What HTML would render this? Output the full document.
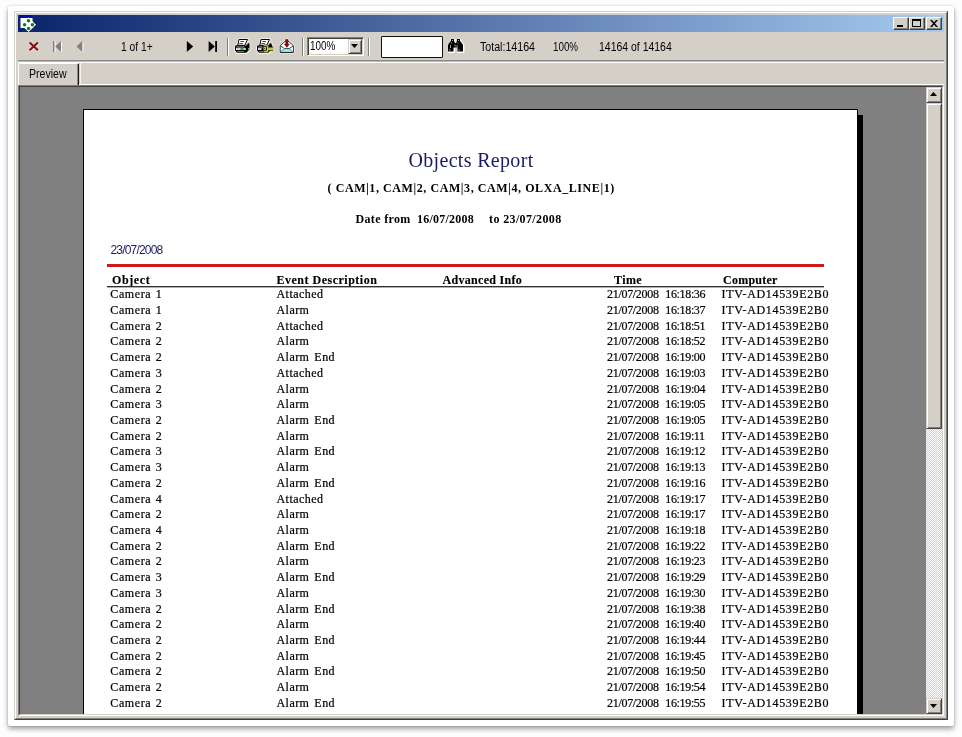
<!DOCTYPE html>
<html><head><meta charset="utf-8"><title>Objects Report</title>
<style>
html,body{margin:0;padding:0;}
body{width:962px;height:737px;position:relative;overflow:hidden;background:#fdfdfd;font-family:"Liberation Sans",sans-serif;font-size:11px;color:#000;}
div,span{box-sizing:border-box;}
.abs{position:absolute;}
#card{position:absolute;left:8px;top:6px;width:946px;height:720px;background:#fff;border-radius:2px;box-shadow:0 3px 5px rgba(0,0,0,.36),0 0 2px rgba(0,0,0,.2);}
#win{position:absolute;left:14px;top:11px;width:934px;height:709px;background:#d4d0c8;border-top:1px solid #d4d0c8;border-left:1px solid #d4d0c8;border-right:1px solid #404040;border-bottom:1px solid #404040;}
#win2{position:absolute;left:15px;top:12px;width:932px;height:707px;border-top:1px solid #fff;border-left:1px solid #fff;border-right:1px solid #808080;border-bottom:1px solid #808080;}
#title{position:absolute;left:18px;top:15px;width:926px;height:17px;background:linear-gradient(to right,#0a246a 0%,#a6caf0 100%);}
.tb{position:absolute;top:17px;width:16px;height:13px;background:#d4d0c8;border-top:1px solid #fff;border-left:1px solid #fff;border-right:1px solid #404040;border-bottom:1px solid #404040;box-shadow:inset -1px -1px 0 #808080;}
#tsep1{position:absolute;left:18px;top:60px;width:926px;height:1px;background:#8e8c86;}
#tsep1b{position:absolute;left:18px;top:61px;width:926px;height:1px;background:#bcb8b0;}
#tsep2{position:absolute;left:18px;top:62px;width:926px;height:1px;background:#fff;}
.vsep{position:absolute;top:38px;width:2px;height:18px;border-left:1px solid #808080;border-right:1px solid #fff;}
.t{position:absolute;white-space:nowrap;line-height:14px;font-size:11px;}
#tab{position:absolute;left:18px;top:63px;width:61px;height:23px;background:#d4d0c8;border-top:1px solid #fff;border-left:1px solid #fff;border-right:1px solid #181818;box-shadow:inset -1px 0 0 #8a8a86;border-radius:2px 2px 0 0;}
#tabline{position:absolute;left:79px;top:84px;width:865px;height:1px;background:#fff;}
#view{position:absolute;left:18px;top:85px;width:926px;height:631px;background:#808080;border-top:1px solid #808080;border-left:1px solid #808080;border-right:1px solid #fff;border-bottom:1px solid #fff;}
#view2{position:absolute;left:19px;top:86px;width:924px;height:629px;background:#808080;border-top:1px solid #404040;border-left:1px solid #404040;border-right:1px solid #d4d0c8;border-bottom:1px solid #d4d0c8;}
#pageshadow{position:absolute;left:857px;top:115px;width:6px;height:600px;background:#000;}
#page{position:absolute;left:83px;top:109px;width:775px;height:620px;background:#fff;border:1px solid #000;}
#clip{position:absolute;left:0;top:0;width:962px;height:714px;overflow:hidden;}
.s{font-family:"Liberation Serif",serif;}
.h{font-family:"Liberation Serif",serif;font-size:12px;font-weight:bold;top:273px;}
.r{position:absolute;left:0;height:14px;width:962px;font-family:"Liberation Serif",serif;font-size:12px;line-height:14px;letter-spacing:0.45px;white-space:nowrap;}
.r span{position:absolute;top:0;}
.c1{left:110.3px;letter-spacing:0.6px;word-spacing:1px;}
.c2{left:276.5px;word-spacing:1.5px;}
.c4{left:607px;letter-spacing:-0.3px;}
.c4b{left:665.3px;letter-spacing:-0.35px;}
.c5{left:721.6px;letter-spacing:0.67px;}
#sb{position:absolute;left:926px;top:87px;width:16px;height:627px;background:#eae8e4 conic-gradient(#fff 25%,#d4d0c8 0 50%,#fff 0 75%,#d4d0c8 0) 0 0/2px 2px;}
.sbtn{position:absolute;left:0;width:16px;height:16px;background:#d4d0c8;border-top:1px solid #d4d0c8;border-left:1px solid #d4d0c8;border-right:1px solid #404040;border-bottom:1px solid #404040;box-shadow:inset 1px 1px 0 #fff, inset -1px -1px 0 #808080;}
.tx{font-size:12px;transform-origin:0 0;}
.t,.r{will-change:opacity;opacity:0.999;}
.r{-webkit-text-stroke:0.22px #000;}
.h{-webkit-text-stroke:0.15px #000;}
#tabw{position:absolute;left:80px;top:63px;width:1px;height:21px;background:#f4f2ee;}

</style></head>
<body>
<div id="card"></div>
<div id="win"></div>
<div id="win2"></div>
<div id="title"></div>
<!-- app icon -->
<svg class="abs" style="left:20px;top:15px" width="17" height="18" viewBox="0 0 17 18">
<rect x="0" y="0" width="12.5" height="3" fill="#0808b0"/>
<rect x="0.5" y="3" width="12" height="10" fill="#fff"/>
<polygon points="8.5,2.5 16,9.7 8.5,17 4,12.5 4,7" fill="#fff"/>
<circle cx="8.5" cy="5.8" r="1.75" fill="#187818"/>
<circle cx="4.6" cy="9.7" r="1.75" fill="#187818"/>
<circle cx="12.4" cy="9.7" r="1.75" fill="#187818"/>
<circle cx="8.5" cy="13.6" r="1.75" fill="#187818"/>
</svg>
<!-- title buttons -->
<div class="tb" style="left:893px"><div class="abs" style="left:3px;top:7px;width:6px;height:2px;background:#000"></div></div>
<div class="tb" style="left:909px"><div class="abs" style="left:2px;top:1px;width:9px;height:8px;border:1px solid #000;border-top:2px solid #000"></div></div>
<div class="tb" style="left:926px"><svg class="abs" style="left:3px;top:2px" width="8" height="7" viewBox="0 0 8 7"><path d="M0,0 L2,0 L8,7 L6,7 Z M6,0 L8,0 L2,7 L0,7 Z" fill="#000"/></svg></div>
<!-- toolbar -->
<svg class="abs" style="left:28px;top:41px" width="12" height="11" viewBox="0 0 12 11"><path d="M2.3,2.3 L10.8,10 M10.8,2.3 L2.3,10" stroke="#fff" stroke-width="2" stroke-opacity=".6" fill="none"/><path d="M1.6,1.6 L10,9.3 M10,1.6 L1.6,9.3" stroke="#8a0c14" stroke-width="2.1" fill="none"/></svg>
<svg class="abs" style="left:52px;top:40px" width="11" height="13" viewBox="0 0 11 13"><rect x="1" y="1" width="1.6" height="11" fill="#808080"/><rect x="2.6" y="1" width="1" height="11" fill="#fff"/><polygon points="10,1.5 10,12.5 4.2,7" fill="#fff"/><polygon points="9,1 9,12 3.2,6.5" fill="#808080"/></svg>
<svg class="abs" style="left:75px;top:40px" width="9" height="13" viewBox="0 0 9 13"><polygon points="8.3,1.5 8.3,12.5 2.5,7" fill="#fff"/><polygon points="7.3,1 7.3,12 1.5,6.5" fill="#808080"/></svg>
<div class="t tx" style="left:120.6px;top:40.2px;transform:scaleX(0.855)">1 of 1+</div>
<svg class="abs" style="left:186px;top:40px" width="8" height="13" viewBox="0 0 8 13"><polygon points="0.8,1 0.8,12 7.2,6.5" fill="#000"/></svg>
<svg class="abs" style="left:208px;top:40px" width="10" height="13" viewBox="0 0 10 13"><polygon points="0.6,1 0.6,12 6.8,6.5" fill="#000"/><rect x="7.2" y="1" width="1.8" height="11" fill="#000"/></svg>
<div class="vsep" style="left:227px"></div>
<!-- printer 1 -->
<svg class="abs" style="left:234px;top:38px" width="17" height="16" viewBox="0 0 17 16">
<defs><linearGradient id="gl" x1="0" x2="1" y1="0" y2="0"><stop offset="0" stop-color="#f0f0f0"/><stop offset="0.35" stop-color="#e0e8e0"/><stop offset="0.6" stop-color="#2a9a3a"/><stop offset="0.85" stop-color="#bfe8bf"/><stop offset="1" stop-color="#e8f4e8"/></linearGradient></defs>
<g>
<polygon points="1,8.2 3.6,7 5,1.2 13.8,1.2 13.2,4.6 15.6,5.6 15.6,12 12.6,15 2.8,15 1,12.8" fill="#f4f2ee" stroke="#f4f2ee" stroke-width="1.8" stroke-linejoin="round"/>
<polygon points="1,8 2,7.2 12,7.2 14.2,4.9 15.5,5.6 15.5,11.6 12.4,14.8 3,14.8 1,12.6" fill="#000"/>
<polygon points="5,1.5 13.5,1.5 10.8,7.3 3.8,7.3" fill="#fff" stroke="#000" stroke-width="1"/>
<path d="M6.3,3.5 H10 M5.3,5.5 H8.9" stroke="#222" stroke-width="0.8"/>
<path d="M11.3,7.7 L13.6,5.9" stroke="#c8c8c8" stroke-width="0.7"/>
<rect x="2.3" y="8.6" width="8.3" height="0.8" fill="#dcdcdc"/>
<rect x="3" y="13.1" width="7" height="0.7" fill="#9a9a9a"/>
</g>
<rect x="2" y="10.1" width="9.8" height="1.8" fill="url(#gl)"/>
<rect x="14.3" y="10" width="0.9" height="1.6" fill="#cfe8cf"/>
</svg>
<!-- printer 2 -->
<svg class="abs" style="left:256px;top:38px" width="18" height="16" viewBox="0 0 18 16">
<g>
<polygon points="1,8.2 3.6,7 5,1.2 13.8,1.2 13.2,4.6 15.6,5.6 15.6,12 12.6,15 2.8,15 1,12.8" fill="#f4f2ee" stroke="#f4f2ee" stroke-width="1.8" stroke-linejoin="round"/>
<polygon points="1,8 2,7.2 12,7.2 14.2,4.9 15.5,5.6 15.5,11.6 12.4,14.8 3,14.8 1,12.6" fill="#000"/>
<polygon points="5,1.5 13.5,1.5 10.8,7.3 3.8,7.3" fill="#fff" stroke="#000" stroke-width="1"/>
<path d="M6.3,3.5 H10 M5.3,5.5 H8.9" stroke="#222" stroke-width="0.8"/>
<path d="M11.3,7.7 L13.6,5.9" stroke="#c8c8c8" stroke-width="0.7"/>
<rect x="2.3" y="8.6" width="8.3" height="0.8" fill="#dcdcdc"/>
<rect x="3" y="13.1" width="7" height="0.7" fill="#9a9a9a"/>
</g>
<rect x="2" y="10.1" width="3.6" height="1.8" fill="#e8e8e8"/>
<polygon points="13.2,8.9 15.3,6.2 16.7,8.9" fill="#000"/>
<rect x="7.4" y="6.8" width="5.1" height="7.7" rx="1.5" fill="#ccd444" stroke="#3c4008" stroke-width="0.6"/>
<rect x="12.4" y="8.9" width="4.6" height="4" fill="#000"/>
<rect x="12.2" y="9.5" width="5" height="2.8" fill="#dce050"/>
<path d="M12.6,10.45 H17.2 M12.6,11.4 H17.2" stroke="#a8ac28" stroke-width="0.45"/>
<rect x="6.7" y="8.3" width="4.1" height="4.4" fill="#000"/>
<rect x="7.5" y="9.1" width="2.5" height="2.8" fill="#d8e060"/>
<rect x="8.2" y="9.95" width="1.1" height="1.1" fill="#303808"/>
</svg>
<!-- envelope -->
<svg class="abs" style="left:279px;top:38px" width="17" height="16" viewBox="0 0 17 16">
<polygon points="1.2,7.6 7.9,1.8 14.4,7.6 14.4,14.5 1.2,14.5" fill="#f6f2f0" stroke="#f6f2f0" stroke-width="2.2" stroke-linejoin="round"/>
<rect x="5.6" y="0.6" width="4.6" height="4" fill="#f6eeee"/>
<polygon points="1.2,7.6 7.9,1.8 14.4,7.6 14.4,14.5 1.2,14.5" fill="#fff" stroke="#1c2c2c" stroke-width="1" stroke-linejoin="round"/>
<polygon points="2,14 5.6,11 10.2,11 13.8,14" fill="#9fe6e0"/>
<polygon points="2,8.4 5,10.6 2,13.4" fill="#e8fafa"/><polygon points="13.8,8.4 10.8,10.6 13.8,13.4" fill="#e8fafa"/>
<path d="M1.6,8 L5.6,10.6 H10.2 L14,8" stroke="#1c3c3c" stroke-width="0.9" fill="none"/>
<path d="M1.7,14.1 L5.6,10.6 M14,14.1 L10.2,10.6" stroke="#2a6a6a" stroke-width="0.7" fill="none"/>
<rect x="6.3" y="1.2" width="3" height="5.2" fill="#7c1010"/>
<polygon points="5,6 10.7,6 7.85,9.7" fill="#7c1010"/>
<path d="M4.6,5 H6.3 M9.3,5 H11" stroke="#f0b0b0" stroke-width="0.9"/>
</svg>
<div class="vsep" style="left:302px"></div>
<!-- combo -->
<div class="abs" style="left:307px;top:37px;width:57px;height:19px;background:#fff;border-top:1px solid #808080;border-left:1px solid #808080;border-right:1px solid #fff;border-bottom:1px solid #fff;box-shadow:inset 1px 1px 0 #404040, inset -1px -1px 0 #d4d0c8"></div>
<div class="t tx" style="left:310px;top:39px;transform:scaleX(0.825)">100%</div>
<div class="abs" style="left:348px;top:39px;width:14px;height:15px;background:#d4d0c8;border-top:1px solid #d4d0c8;border-left:1px solid #d4d0c8;border-right:1px solid #404040;border-bottom:1px solid #404040;box-shadow:inset 1px 1px 0 #fff, inset -1px -1px 0 #808080"><svg class="abs" style="left:2px;top:4px" width="7" height="4" viewBox="0 0 7 4"><polygon points="0,0 7,0 3.5,4" fill="#000"/></svg></div>
<div class="vsep" style="left:368px"></div>
<!-- search box -->
<div class="abs" style="left:381px;top:36px;width:62px;height:22px;background:#fff;border:1px solid #111;border-radius:1px;"></div>
<!-- binoculars -->
<svg class="abs" style="left:447px;top:38px" width="18" height="16" viewBox="0 0 18 16">
<g fill="#fff" stroke="#fff" stroke-width="1.6" stroke-linejoin="round" transform="translate(0.6,0.6)">
<polygon points="4,1 7,1 7,3 8,5 8,8 6.5,10 6.5,13.5 1,13.5 1,7 3,4 4,3"/>
<polygon points="10,1 13,1 13,3 14,4 16,7 16,13.5 10.5,13.5 10.5,10 9,8 9,5 10,3"/>
</g>
<g fill="#000">
<polygon points="4,1 7,1 7,3 8,5 8,8 6.5,10 6.5,13.5 1,13.5 1,7 3,4 4,3"/>
<polygon points="10,1 13,1 13,3 14,4 16,7 16,13.5 10.5,13.5 10.5,10 9,8 9,5 10,3"/>
<rect x="7" y="5" width="3" height="4.5"/>
</g>
<g fill="#9a9a9a"><rect x="5" y="2" width="1" height="1"/><rect x="11" y="2" width="1" height="1"/><rect x="3" y="7" width="1" height="3"/><rect x="9.6" y="7" width="1" height="3"/><rect x="7.6" y="6.5" width="1" height="2"/><rect x="2.2" y="11.2" width="1" height="1.6"/><rect x="11.6" y="11.2" width="1" height="1.6"/><rect x="4" y="4.4" width="1" height="1"/><rect x="10.4" y="4.4" width="1" height="1"/></g>
</svg>
<div class="t tx" style="left:479.5px;top:39.6px;transform:scaleX(0.887)">Total:14164</div>
<div class="t tx" style="left:552.6px;top:39.6px;transform:scaleX(0.815)">100%</div>
<div class="t tx" style="left:598.6px;top:39.6px;transform:scaleX(0.872)">14164 of 14164</div>
<div id="tsep1"></div><div id="tsep1b"></div><div id="tsep2"></div>
<div id="tab"></div>
<div class="t tx" style="left:29.4px;top:66.9px;transform:scaleX(0.88)">Preview</div>
<div id="tabline"></div><div id="tabw"></div>
<div id="view"></div><div id="view2"></div>
<div id="clip">
<div id="pageshadow"></div>
<div id="page"></div>
<div class="t s" style="left:408.5px;top:148px;font-size:20px;line-height:24px;color:#1a1a66;letter-spacing:0.32px">Objects Report</div>
<div class="t s" style="left:327.6px;top:181px;font-size:12px;font-weight:bold;letter-spacing:0.58px">( CAM|1, CAM|2, CAM|3, CAM|4, OLXA_LINE|1)</div>
<div class="t s" style="left:355.5px;top:211.5px;font-size:12px;font-weight:bold;letter-spacing:0.33px">Date from</div>
<div class="t s" style="left:417px;top:211.5px;font-size:12px;font-weight:bold;letter-spacing:0.22px">16/07/2008</div>
<div class="t s" style="left:489px;top:211.5px;font-size:12px;font-weight:bold;letter-spacing:0.38px">to 23/07/2008</div>
<div class="t" style="left:110.5px;top:243px;font-size:12px;color:#1a1a66;letter-spacing:-0.82px">23/07/2008</div>
<div class="abs" style="left:107px;top:264px;width:717px;height:3px;background:#cc1a1a"></div>
<div class="t h" style="left:112px;letter-spacing:0.6px">Object</div>
<div class="t h" style="left:276.5px;letter-spacing:0.5px">Event Description</div>
<div class="t h" style="left:442.5px;letter-spacing:0.3px">Advanced Info</div>
<div class="t h" style="left:614px;letter-spacing:0.4px">Time</div>
<div class="t h" style="left:723px;letter-spacing:0.25px">Computer</div>
<div class="abs" style="left:107px;top:286px;width:717px;height:1px;background:#303030"></div>
<div class="abs" style="left:107px;top:287px;width:717px;height:1px;background:#b0b0b0"></div>
<div id="rows">
<div class="r" style="top:287.00px"><span class="c1">Camera 1</span><span class="c2">Attached</span><span class="c4">21/07/2008</span><span class="c4b">16:18:36</span><span class="c5">ITV-AD14539E2B0</span></div>
<div class="r" style="top:303.00px"><span class="c1">Camera 1</span><span class="c2">Alarm</span><span class="c4">21/07/2008</span><span class="c4b">16:18:37</span><span class="c5">ITV-AD14539E2B0</span></div>
<div class="r" style="top:319.00px"><span class="c1">Camera 2</span><span class="c2">Attached</span><span class="c4">21/07/2008</span><span class="c4b">16:18:51</span><span class="c5">ITV-AD14539E2B0</span></div>
<div class="r" style="top:334.00px"><span class="c1">Camera 2</span><span class="c2">Alarm</span><span class="c4">21/07/2008</span><span class="c4b">16:18:52</span><span class="c5">ITV-AD14539E2B0</span></div>
<div class="r" style="top:350.00px"><span class="c1">Camera 2</span><span class="c2">Alarm End</span><span class="c4">21/07/2008</span><span class="c4b">16:19:00</span><span class="c5">ITV-AD14539E2B0</span></div>
<div class="r" style="top:366.00px"><span class="c1">Camera 3</span><span class="c2">Attached</span><span class="c4">21/07/2008</span><span class="c4b">16:19:03</span><span class="c5">ITV-AD14539E2B0</span></div>
<div class="r" style="top:382.00px"><span class="c1">Camera 2</span><span class="c2">Alarm</span><span class="c4">21/07/2008</span><span class="c4b">16:19:04</span><span class="c5">ITV-AD14539E2B0</span></div>
<div class="r" style="top:397.00px"><span class="c1">Camera 3</span><span class="c2">Alarm</span><span class="c4">21/07/2008</span><span class="c4b">16:19:05</span><span class="c5">ITV-AD14539E2B0</span></div>
<div class="r" style="top:413.00px"><span class="c1">Camera 2</span><span class="c2">Alarm End</span><span class="c4">21/07/2008</span><span class="c4b">16:19:05</span><span class="c5">ITV-AD14539E2B0</span></div>
<div class="r" style="top:429.00px"><span class="c1">Camera 2</span><span class="c2">Alarm</span><span class="c4">21/07/2008</span><span class="c4b">16:19:11</span><span class="c5">ITV-AD14539E2B0</span></div>
<div class="r" style="top:444.00px"><span class="c1">Camera 3</span><span class="c2">Alarm End</span><span class="c4">21/07/2008</span><span class="c4b">16:19:12</span><span class="c5">ITV-AD14539E2B0</span></div>
<div class="r" style="top:460.00px"><span class="c1">Camera 3</span><span class="c2">Alarm</span><span class="c4">21/07/2008</span><span class="c4b">16:19:13</span><span class="c5">ITV-AD14539E2B0</span></div>
<div class="r" style="top:476.00px"><span class="c1">Camera 2</span><span class="c2">Alarm End</span><span class="c4">21/07/2008</span><span class="c4b">16:19:16</span><span class="c5">ITV-AD14539E2B0</span></div>
<div class="r" style="top:492.00px"><span class="c1">Camera 4</span><span class="c2">Attached</span><span class="c4">21/07/2008</span><span class="c4b">16:19:17</span><span class="c5">ITV-AD14539E2B0</span></div>
<div class="r" style="top:507.00px"><span class="c1">Camera 2</span><span class="c2">Alarm</span><span class="c4">21/07/2008</span><span class="c4b">16:19:17</span><span class="c5">ITV-AD14539E2B0</span></div>
<div class="r" style="top:523.00px"><span class="c1">Camera 4</span><span class="c2">Alarm</span><span class="c4">21/07/2008</span><span class="c4b">16:19:18</span><span class="c5">ITV-AD14539E2B0</span></div>
<div class="r" style="top:539.00px"><span class="c1">Camera 2</span><span class="c2">Alarm End</span><span class="c4">21/07/2008</span><span class="c4b">16:19:22</span><span class="c5">ITV-AD14539E2B0</span></div>
<div class="r" style="top:554.00px"><span class="c1">Camera 2</span><span class="c2">Alarm</span><span class="c4">21/07/2008</span><span class="c4b">16:19:23</span><span class="c5">ITV-AD14539E2B0</span></div>
<div class="r" style="top:570.00px"><span class="c1">Camera 3</span><span class="c2">Alarm End</span><span class="c4">21/07/2008</span><span class="c4b">16:19:29</span><span class="c5">ITV-AD14539E2B0</span></div>
<div class="r" style="top:586.00px"><span class="c1">Camera 3</span><span class="c2">Alarm</span><span class="c4">21/07/2008</span><span class="c4b">16:19:30</span><span class="c5">ITV-AD14539E2B0</span></div>
<div class="r" style="top:602.00px"><span class="c1">Camera 2</span><span class="c2">Alarm End</span><span class="c4">21/07/2008</span><span class="c4b">16:19:38</span><span class="c5">ITV-AD14539E2B0</span></div>
<div class="r" style="top:617.00px"><span class="c1">Camera 2</span><span class="c2">Alarm</span><span class="c4">21/07/2008</span><span class="c4b">16:19:40</span><span class="c5">ITV-AD14539E2B0</span></div>
<div class="r" style="top:633.00px"><span class="c1">Camera 2</span><span class="c2">Alarm End</span><span class="c4">21/07/2008</span><span class="c4b">16:19:44</span><span class="c5">ITV-AD14539E2B0</span></div>
<div class="r" style="top:649.00px"><span class="c1">Camera 2</span><span class="c2">Alarm</span><span class="c4">21/07/2008</span><span class="c4b">16:19:45</span><span class="c5">ITV-AD14539E2B0</span></div>
<div class="r" style="top:664.00px"><span class="c1">Camera 2</span><span class="c2">Alarm End</span><span class="c4">21/07/2008</span><span class="c4b">16:19:50</span><span class="c5">ITV-AD14539E2B0</span></div>
<div class="r" style="top:680.00px"><span class="c1">Camera 2</span><span class="c2">Alarm</span><span class="c4">21/07/2008</span><span class="c4b">16:19:54</span><span class="c5">ITV-AD14539E2B0</span></div>
<div class="r" style="top:696.00px"><span class="c1">Camera 2</span><span class="c2">Alarm End</span><span class="c4">21/07/2008</span><span class="c4b">16:19:55</span><span class="c5">ITV-AD14539E2B0</span></div>
</div>
</div>
<div id="sb">
<div class="sbtn" style="top:0"><svg class="abs" style="left:3px;top:4px" width="7" height="4" viewBox="0 0 7 4"><polygon points="0,4 7,4 3.5,0" fill="#000"/></svg></div>
<div class="sbtn" style="top:16px;height:326px"></div>
<div class="sbtn" style="top:611px"><svg class="abs" style="left:3px;top:5px" width="7" height="4" viewBox="0 0 7 4"><polygon points="0,0 7,0 3.5,4" fill="#000"/></svg></div>
</div>
</body></html>
